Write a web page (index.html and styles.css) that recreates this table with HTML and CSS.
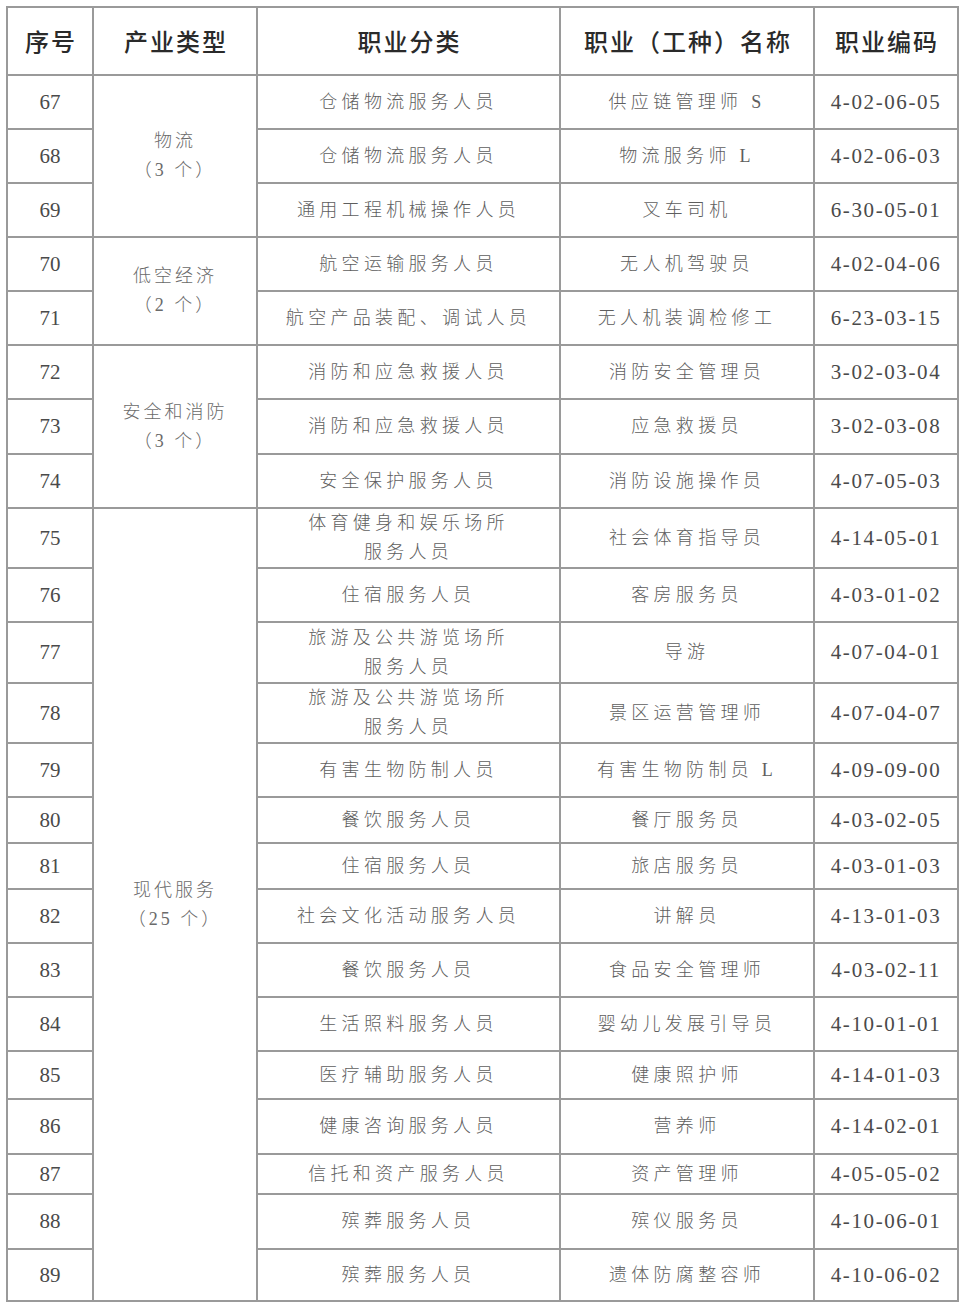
FILE: index.html
```html
<!DOCTYPE html>
<html lang="zh-CN">
<head>
<meta charset="utf-8">
<title>职业目录</title>
<link rel="stylesheet" href="styles.css">
</head>
<body>
<table class="jobs">
  <colgroup>
    <col class="c-no"><col class="c-ind"><col class="c-cat"><col class="c-name"><col class="c-code">
  </colgroup>
  <thead>
    <tr class="hd">
      <th>序号</th><th>产业类型</th><th>职业分类</th><th>职业（工种）名称</th><th>职业编码</th>
    </tr>
  </thead>
  <tbody>
    <tr class="h54"><td class="no">67</td><td class="ind" rowspan="3">物流<br>（3 个）</td><td class="zh">仓储物流服务人员</td><td class="zh">供应链管理师 S</td><td class="code">4-02-06-05</td></tr>
    <tr class="h54"><td class="no">68</td><td class="zh">仓储物流服务人员</td><td class="zh">物流服务师 L</td><td class="code">4-02-06-03</td></tr>
    <tr class="h54"><td class="no">69</td><td class="zh">通用工程机械操作人员</td><td class="zh">叉车司机</td><td class="code">6-30-05-01</td></tr>
    <tr class="h54"><td class="no">70</td><td class="ind" rowspan="2">低空经济<br>（2 个）</td><td class="zh">航空运输服务人员</td><td class="zh">无人机驾驶员</td><td class="code">4-02-04-06</td></tr>
    <tr class="h54"><td class="no">71</td><td class="zh">航空产品装配、调试人员</td><td class="zh">无人机装调检修工</td><td class="code">6-23-03-15</td></tr>
    <tr class="h54"><td class="no">72</td><td class="ind" rowspan="3">安全和消防<br>（3 个）</td><td class="zh">消防和应急救援人员</td><td class="zh">消防安全管理员</td><td class="code">3-02-03-04</td></tr>
    <tr class="h55"><td class="no">73</td><td class="zh">消防和应急救援人员</td><td class="zh">应急救援员</td><td class="code">3-02-03-08</td></tr>
    <tr class="h54"><td class="no">74</td><td class="zh">安全保护服务人员</td><td class="zh">消防设施操作员</td><td class="code">4-07-05-03</td></tr>
    <tr class="h60"><td class="no">75</td><td class="ind" rowspan="15">现代服务<br>（25 个）</td><td class="zh two">体育健身和娱乐场所<br>服务人员</td><td class="zh">社会体育指导员</td><td class="code">4-14-05-01</td></tr>
    <tr class="h54"><td class="no">76</td><td class="zh">住宿服务人员</td><td class="zh">客房服务员</td><td class="code">4-03-01-02</td></tr>
    <tr class="h61"><td class="no">77</td><td class="zh two">旅游及公共游览场所<br>服务人员</td><td class="zh">导游</td><td class="code">4-07-04-01</td></tr>
    <tr class="h60"><td class="no">78</td><td class="zh two">旅游及公共游览场所<br>服务人员</td><td class="zh">景区运营管理师</td><td class="code">4-07-04-07</td></tr>
    <tr class="h54"><td class="no">79</td><td class="zh">有害生物防制人员</td><td class="zh">有害生物防制员 L</td><td class="code">4-09-09-00</td></tr>
    <tr class="h46"><td class="no">80</td><td class="zh">餐饮服务人员</td><td class="zh">餐厅服务员</td><td class="code">4-03-02-05</td></tr>
    <tr class="h46"><td class="no">81</td><td class="zh">住宿服务人员</td><td class="zh">旅店服务员</td><td class="code">4-03-01-03</td></tr>
    <tr class="h54"><td class="no">82</td><td class="zh">社会文化活动服务人员</td><td class="zh">讲解员</td><td class="code">4-13-01-03</td></tr>
    <tr class="h54"><td class="no">83</td><td class="zh">餐饮服务人员</td><td class="zh">食品安全管理师</td><td class="code">4-03-02-11</td></tr>
    <tr class="h54"><td class="no">84</td><td class="zh">生活照料服务人员</td><td class="zh">婴幼儿发展引导员</td><td class="code">4-10-01-01</td></tr>
    <tr class="h48"><td class="no">85</td><td class="zh">医疗辅助服务人员</td><td class="zh">健康照护师</td><td class="code">4-14-01-03</td></tr>
    <tr class="h55"><td class="no">86</td><td class="zh">健康咨询服务人员</td><td class="zh">营养师</td><td class="code">4-14-02-01</td></tr>
    <tr class="h40"><td class="no">87</td><td class="zh">信托和资产服务人员</td><td class="zh">资产管理师</td><td class="code">4-05-05-02</td></tr>
    <tr class="h55"><td class="no">88</td><td class="zh">殡葬服务人员</td><td class="zh">殡仪服务员</td><td class="code">4-10-06-01</td></tr>
    <tr class="h52"><td class="no">89</td><td class="zh">殡葬服务人员</td><td class="zh">遗体防腐整容师</td><td class="code">4-10-06-02</td></tr>
  </tbody>
</table>
</body>
</html>
```
FILE: styles.css
```css
html, body {
  margin: 0;
  padding: 0;
  background: #ffffff;
}
body {
  padding: 6px 0 0 6px;
}
.jobs {
  border-collapse: collapse;
  table-layout: fixed;
  width: 951px;
  font-family: "Noto Sans CJK SC", "Noto Sans", sans-serif;
}
.c-no { width: 86px; }
.c-ind { width: 164px; }
.c-cat { width: 303px; }
.c-name { width: 254px; }
.c-code { width: 144px; }

.jobs th, .jobs td {
  border: 2px solid #9a9a9a;
  padding: 0;
  text-align: center;
  vertical-align: middle;
}
.hd { height: 68px; }
.jobs th {
  font-size: 24px;
  font-weight: 500;
  color: #2a2a2a;
  letter-spacing: 2px;
  padding-left: 2px;
  line-height: 1.2;
}
.h40 { height: 40px; }
.h46 { height: 46px; }
.h48 { height: 48px; }
.h52 { height: 52px; }
.h54 { height: 54px; }
.h55 { height: 55px; }
.h60 { height: 60px; }
.h61 { height: 61px; }

.no {
  font-family: "Liberation Serif", "Times New Roman", serif;
  font-size: 21px;
  color: #4a4a4a;
}
.code {
  font-family: "Liberation Serif", "Times New Roman", serif;
  font-size: 21px;
  color: #4a4a4a;
  letter-spacing: 1.6px;
  padding-left: 2px;
}
.zh {
  font-family: "Liberation Serif", "Noto Sans CJK SC", serif;
  font-size: 18px;
  font-weight: 300;
  color: #5e5e5e;
  letter-spacing: 4.3px;
  padding-left: 4px;
  line-height: 29px;
}
.two {
  line-height: 29px;
}
.ind {
  font-family: "Liberation Serif", "Noto Sans CJK SC", serif;
  font-size: 18px;
  font-weight: 300;
  color: #6a6a6a;
  letter-spacing: 3px;
  line-height: 29px;
}
```
